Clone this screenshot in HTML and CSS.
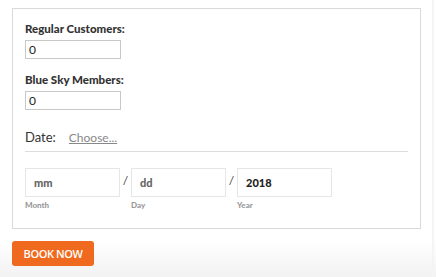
FILE: index.html
```html
<!DOCTYPE html>
<html>
<head>
    <title>Booking</title>
    <link rel="stylesheet" href="styles.css">
</head>
<body>
    <div class="page">
        <form class="booking-box">
            <label class="field-label" for="regular">Regular Customers:</label>
            <input type="text" class="qty" id="regular" value="0">

            <label class="field-label" for="members">Blue Sky Members:</label>
            <input type="text" class="qty" id="members" value="0">

            <div class="date-row">
                <span class="date-label">Date:</span>
                <a href="#" class="choose">Choose...</a>
            </div>

            <div class="date-fields">
                <div class="date-part">
                    <input type="text" class="date-input" placeholder="mm">
                    <small>Month</small>
                </div>
                <span class="sep">/</span>
                <div class="date-part">
                    <input type="text" class="date-input" placeholder="dd">
                    <small>Day</small>
                </div>
                <span class="sep">/</span>
                <div class="date-part">
                    <input type="text" class="date-input" value="2018">
                    <small>Year</small>
                </div>
            </div>
        </form>

        <button type="button" class="book-btn">BOOK NOW</button>
    </div>
</body>
</html>
```

FILE: styles.css
```css
html, body {
    height: 100%;
}
body {
    margin: 0;
    font-family: Lato, 'Open Sans', Arial, sans-serif;
    color: #333;
    background: linear-gradient(to bottom, #fff 0, #fff 240px, #f2f2f2 277px);
}
.page {
    width: 434px;
    height: 100%;
    border-right: 2px solid #f4f4f4;
    box-sizing: border-box;
    padding: 8px 0 0 12px;
}
.booking-box {
    width: 409px;
    box-sizing: border-box;
    border: 1px solid #d9d9d9;
    padding: 12px 12px 14px 12px;
    height: 221px;
}
.field-label {
    display: block;
    font-size: 11.5px;
    font-weight: 900;
    color: #333;
    line-height: 16px;
}
.qty {
    display: block;
    width: 96px;
    height: 19px;
    box-sizing: border-box;
    border: 1px solid #c8c8c8;
    padding: 0 3px;
    margin: 3px 0 13px;
    font-family: inherit;
    font-size: 12px;
    color: #222;
}
.date-row {
    display: flex;
    align-items: baseline;
    gap: 13px;
    border-bottom: 1px solid #ddd;
    padding: 6px 0 6px;
}
.date-label {
    font-size: 13px;
    color: #333;
}
.choose {
    font-size: 12px;
    color: #888;
    text-decoration: underline;
}
.date-fields {
    display: flex;
    align-items: flex-start;
    margin-top: 16px;
}
.date-part {
    display: flex;
    flex-direction: column;
}
.date-input {
    width: 95px;
    height: 29px;
    box-sizing: border-box;
    border: 1px solid #e6e6e6;
    padding: 0 8px;
    font-family: inherit;
    font-size: 11px;
    font-weight: 900;
    color: #222;
}
.date-input::placeholder {
    color: #666;
}
.date-part small {
    font-size: 8px;
    font-weight: 900;
    color: #999;
    margin-top: 3px;
}
.sep {
    width: 11px;
    text-align: center;
    font-size: 12px;
    color: #444;
    margin-top: 5px;
}
.book-btn {
    display: block;
    margin-top: 12px;
    width: 82px;
    height: 25px;
    border: none;
    border-radius: 3px;
    background-color: #ef6a1e;
    color: #fff;
    font-family: 'Open Sans', Arial, sans-serif;
    font-size: 11px;
    font-weight: 600;
    letter-spacing: -0.4px;
    cursor: pointer;
}
```
